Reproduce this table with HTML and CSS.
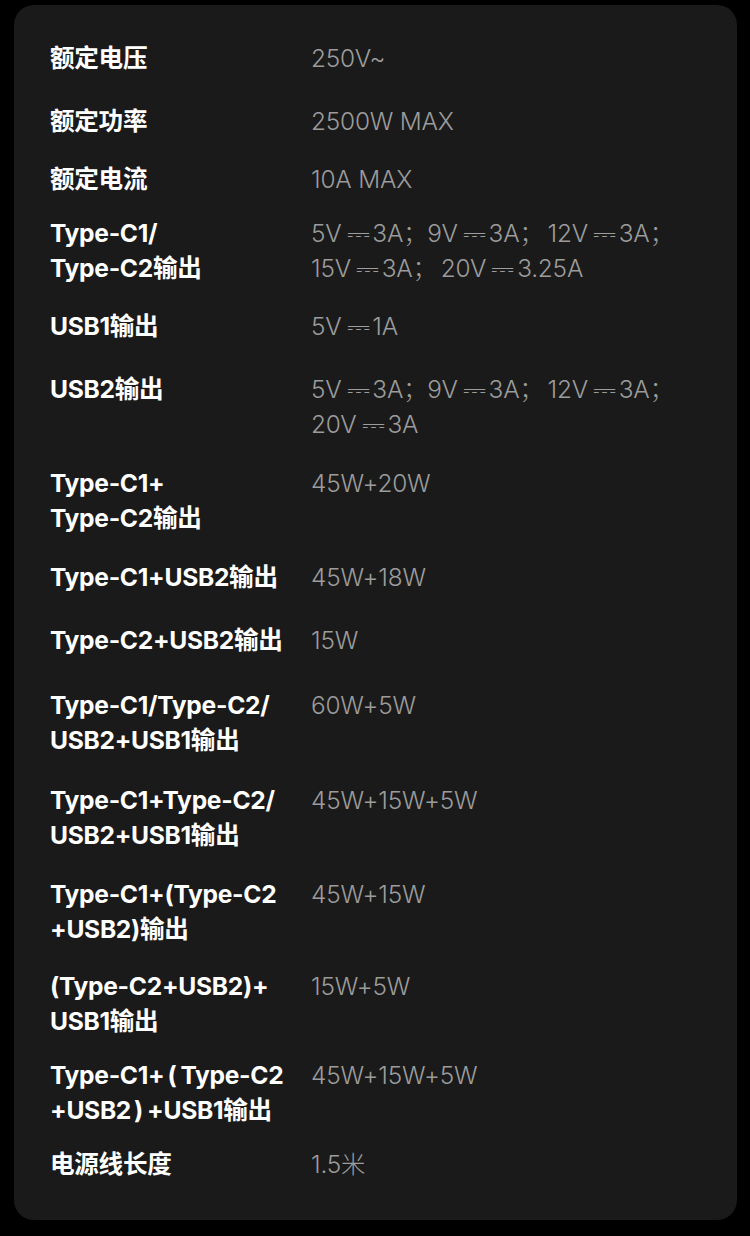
FILE: index.html
```html
<!DOCTYPE html>
<html lang="zh-CN">
<head>
<meta charset="utf-8">
<title>规格参数</title>
<link rel="stylesheet" href="styles.css">
</head>
<body>
<div class="card">
  <div class="specs">
    <div class="row"><div class="k">额定电压</div><div class="v">250V~</div></div>
    <div class="row"><div class="k">额定功率</div><div class="v">2500W MAX</div></div>
    <div class="row"><div class="k">额定电流</div><div class="v">10A MAX</div></div>
    <div class="row"><div class="k">Type-C1/<br>Type-C2输出</div>
      <div class="v">5V<span class="dc">⎓</span>3A；<span class="sp"></span>9V<span class="dc">⎓</span>3A；<span class="sp2"></span>12V<span class="dc">⎓</span>3A；<br>15V<span class="dc">⎓</span>3A；<span class="sp2"></span>20V<span class="dc">⎓</span>3.25A</div></div>
    <div class="row"><div class="k">USB1输出</div><div class="v">5V<span class="dc">⎓</span>1A</div></div>
    <div class="row"><div class="k">USB2输出</div>
      <div class="v">5V<span class="dc">⎓</span>3A；<span class="sp"></span>9V<span class="dc">⎓</span>3A；<span class="sp2"></span>12V<span class="dc">⎓</span>3A；<br>20V<span class="dc">⎓</span>3A</div></div>
    <div class="row"><div class="k">Type-C1+<br>Type-C2输出</div><div class="v">45W+20W</div></div>
    <div class="row"><div class="k">Type-C1+USB2输出</div><div class="v">45W+18W</div></div>
    <div class="row"><div class="k">Type-C2+USB2输出</div><div class="v">15W</div></div>
    <div class="row"><div class="k">Type-C1/Type-C2/<br>USB2+USB1输出</div><div class="v">60W+5W</div></div>
    <div class="row"><div class="k">Type-C1+Type-C2/<br>USB2+USB1输出</div><div class="v">45W+15W+5W</div></div>
    <div class="row"><div class="k">Type-C1+(Type-C2<br>+USB2)输出</div><div class="v">45W+15W</div></div>
    <div class="row"><div class="k">(Type-C2+USB2)+<br>USB1输出</div><div class="v">15W+5W</div></div>
    <div class="row"><div class="k">Type-C1+<span class="fp">(</span>Type-C2<br>+USB2<span class="fp">)</span>+USB1输出</div><div class="v">45W+15W+5W</div></div>
    <div class="row"><div class="k">电源线长度</div><div class="v">1.5米</div></div>
  </div>
</div>
</body>
</html>
```
FILE: styles.css
```css
html, body {
  margin: 0;
  padding: 0;
  background: #000;
}
body {
  width: 750px;
  height: 1236px;
  padding: 5px 13px 0 14px;
  box-sizing: border-box;
}
.card {
  background: #1a1a1a;
  border-radius: 20px;
  height: 1215px;
  box-sizing: border-box;
  padding: 36px 36px 38px 36px;
}
.specs {
  display: flex;
  flex-direction: column;
}
.row {
  display: grid;
  grid-template-columns: 261px 1fr;
  line-height: 35px;
}
.row:nth-child(2) { margin-top: 28px; }
.row:nth-child(3) { margin-top: 23px; }
.row:nth-child(4) { margin-top: 19px; }
.row:nth-child(5) { margin-top: 23px; }
.row:nth-child(6) { margin-top: 28px; }
.row:nth-child(7) { margin-top: 24px; }
.row:nth-child(8) { margin-top: 24px; }
.row:nth-child(9) { margin-top: 28px; }
.row:nth-child(10) { margin-top: 30px; }
.row:nth-child(11) { margin-top: 25px; }
.row:nth-child(12) { margin-top: 24px; }
.row:nth-child(13) { margin-top: 22px; }
.row:nth-child(14) { margin-top: 19px; }
.row:nth-child(15) { margin-top: 19px; }
.k {
  color: #fff;
  font-family: "Inter", "Noto Sans CJK SC", sans-serif;
  font-weight: 700;
  font-size: 24.6px;
  letter-spacing: -0.3px;
  white-space: nowrap;
}
.fp {
  display: inline-block;
  padding: 0 4px 0 3px;
}
.v {
  color: #9c9c9c;
  font-family: "Inter", "Noto Sans CJK SC", sans-serif;
  font-weight: 300;
  font-size: 24.4px;
  letter-spacing: -0.2px;
  white-space: nowrap;
}
.dc {
  font-family: "DejaVu Sans", sans-serif;
  font-size: 24px;
  line-height: 0;
  margin: 0 5px 0 7px;
  display: inline-block;
  transform: scaleX(1.2);
}
.sp { display: inline-block; width: 0; }
.sp2 { display: inline-block; width: 4px; }
```
